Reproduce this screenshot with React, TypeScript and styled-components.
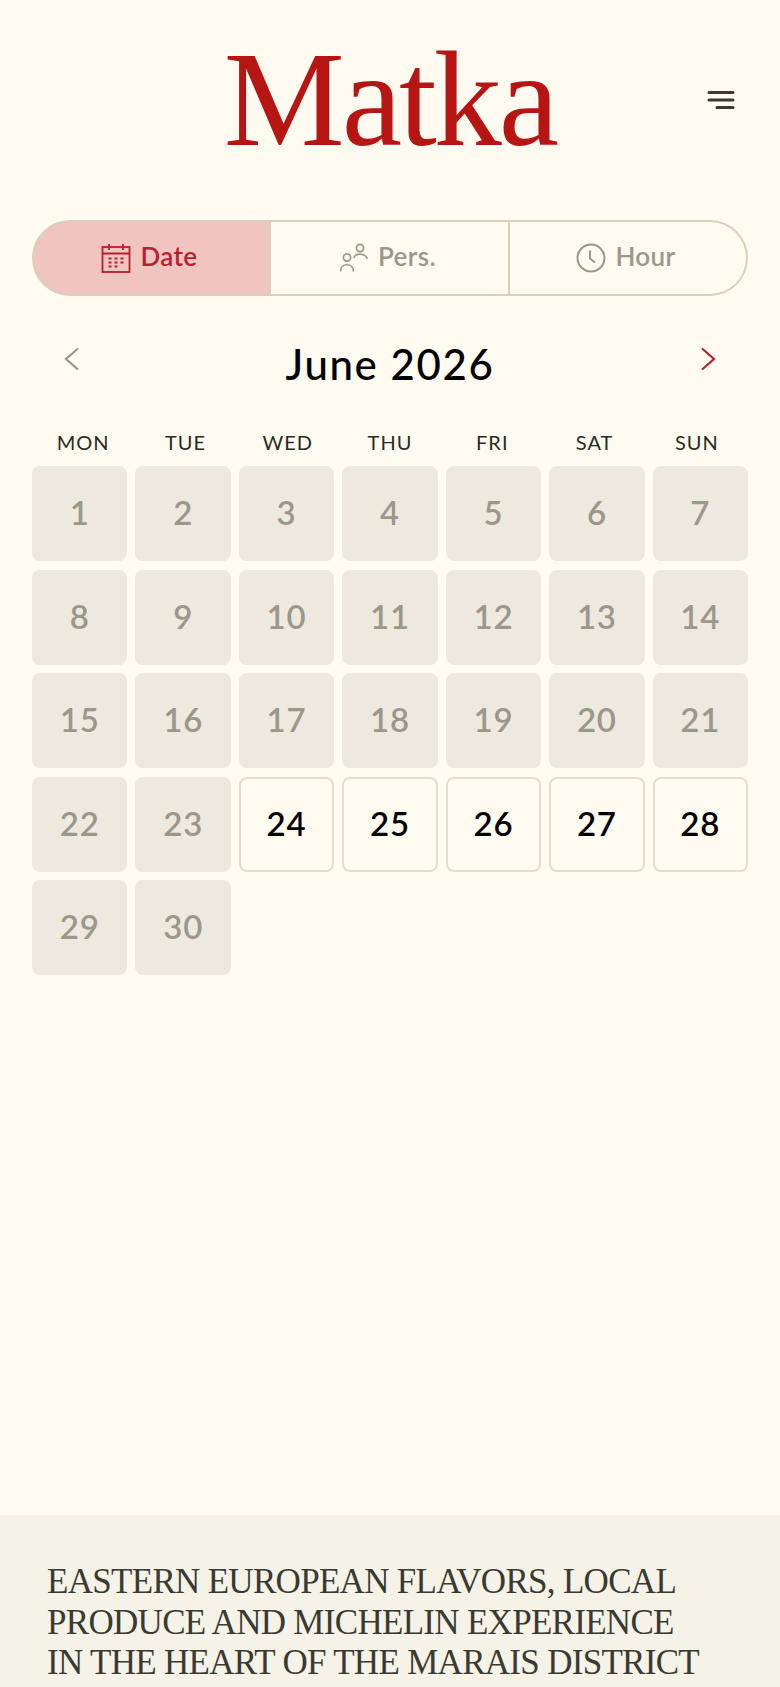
import * as React from 'react';
import styled, { createGlobalStyle } from 'styled-components';

// bg #fffbf0, red #b82030, muted #9a978b

const GlobalStyle = createGlobalStyle`
    html, body {
        margin: 0;
        padding: 0;
        background: #fffbf0;
    }
    * {
        box-sizing: border-box;
    }
`;

const Page = styled.div`
    display: flex;
    flex-direction: column;
    width: 780px;
    height: 1687px;
    overflow: hidden;
    background: #fffbf0;
    font-family: 'Lato', 'Liberation Sans', sans-serif;
`;

const Header = styled.header`
    position: relative;
    display: flex;
    justify-content: center;
    height: 220px;
`;

const Logo = styled.h1`
    margin: 0;
    padding-top: 24px;
    height: 160px;
    font-family: 'Liberation Serif', serif;
    font-size: 136px;
    line-height: 150px;
    font-weight: 400;
    letter-spacing: -3px;
    color: #b71414;
`;

const MenuButton = styled.button`
    position: absolute;
    top: 89px;
    right: 45px;
    display: flex;
    padding: 0;
    border: 0;
    background: none;
`;

const Main = styled.main`
    flex: 1;
    padding: 0 32px;
`;

const Tabs = styled.div`
    display: grid;
    grid-template-columns: 239px 239px 1fr;
    height: 76px;
`;

const Tab = styled.div<{ $active?: boolean; $first?: boolean; $last?: boolean }>`
    display: flex;
    align-items: center;
    justify-content: center;
    gap: 9px;
    padding-right: 4px;
    font-size: 26px;
    line-height: 30px;
    font-weight: 600;
    letter-spacing: 0.4px;
    color: ${p => (p.$active ? '#b82030' : '#9a978b')};
    background: ${p => (p.$active ? '#f0c4bf' : 'transparent')};
    border: 2px solid #d8d1b8;
    border-left-width: ${p => (p.$first ? '2px' : '0')};
    border-radius: ${p => (p.$first ? '38px 0 0 38px' : p.$last ? '0 38px 38px 0' : '0')};
`;

const TabLabel = styled.span`
    margin-top: -4px;
`;

const MonthBar = styled.div`
    display: flex;
    align-items: center;
    justify-content: space-between;
    height: 120px;
    padding: 0 32px;
`;

const MonthTitle = styled.h2`
    margin: 16px 0 0;
    font-size: 42px;
    line-height: 48px;
    font-weight: 500;
    letter-spacing: 1.6px;
    color: #000;
`;

const ArrowButton = styled.button`
    display: flex;
    margin-top: 6px;
    padding: 0;
    border: 0;
    background: none;
`;

const Weekdays = styled.div`
    display: grid;
    grid-template-columns: repeat(7, 1fr);
    margin-top: 12px;
    height: 38px;
`;

const Weekday = styled.span`
    text-align: center;
    font-size: 20px;
    line-height: 28px;
    letter-spacing: 1px;
    color: #2a2a22;
`;

const Days = styled.div`
    display: grid;
    grid-template-columns: repeat(7, 1fr);
    grid-auto-rows: 95px;
    gap: 8.5px 8px;
`;

const Day = styled.div<{ $open?: boolean }>`
    display: flex;
    align-items: center;
    justify-content: center;
    padding-bottom: 3px;
    font-size: 33px;
    font-weight: 600;
    letter-spacing: 0.8px;
    border-radius: 8px;
    color: ${p => (p.$open ? '#000' : '#9a978b')};
    background: ${p => (p.$open ? 'transparent' : '#eee9df')};
    border: 2px solid ${p => (p.$open ? '#e3ddcf' : '#eee9df')};
`;

const Footer = styled.footer`
    height: 172px;
    padding: 47px 47px 0;
    background: #f5f2e8;
`;

const Tagline = styled.p`
    margin: 0;
    font-family: 'Liberation Serif', serif;
    font-size: 35px;
    line-height: 40.5px;
    letter-spacing: -0.7px;
    color: #3a3a32;
    white-space: pre-line;
`;

const CalendarIcon = () => (
    <svg width="30" height="30" viewBox="0 0 30 30" fill="none" stroke="currentColor" strokeWidth="1.8">
        <rect x="1.5" y="4" width="27" height="25" />
        <path d="M1.5 10.500h27M8 1v6M22 1v6" />
        <path d="M7.500 15.500h3M13.500 15.500h3M19.500 15.500h3M7.500 19.500h3M13.500 19.500h3M19.500 19.500h3M7.500 23.500h3M13.500 23.500h3" strokeWidth="1.8" />
    </svg>
);

const PeopleIcon = () => (
    <svg width="30" height="30" viewBox="0 0 30 30" fill="none" stroke="currentColor" strokeWidth="1.7">
        <circle cx="8" cy="14.500" r="3.600" />
        <path d="M1.500 28.500c0-9 13-9 13 0" />
        <circle cx="21" cy="5" r="3.600" />
        <path d="M15 15c1-5 11-5.500 13.500 1" />
    </svg>
);

const ClockIcon = () => (
    <svg width="30" height="30" viewBox="0 0 30 30" fill="none" stroke="currentColor" strokeWidth="2">
        <circle cx="15" cy="15" r="13.500" />
        <path d="M14 7.500v8l5 4" />
    </svg>
);

const weekdays = ['MON', 'TUE', 'WED', 'THU', 'FRI', 'SAT', 'SUN'];
const days = Array.from({ length: 30 }, (_, i) => i + 1);
const isOpen = (day: number) => day >= 24 && day <= 28;

const App = () => {
    return (
        <>
            <GlobalStyle />
            <Page>
                <Header>
                    <Logo>Matka</Logo>
                    <MenuButton aria-label="Menu">
                        <svg width="28" height="22" viewBox="0 0 28 22" fill="none" stroke="#3a3a32" strokeWidth="3" strokeLinecap="round">
                            <path d="M2 3.500h24M2 11h24M10 18.500h16" />
                        </svg>
                    </MenuButton>
                </Header>
                <Main>
                    <Tabs>
                        <Tab $active $first>
                            <CalendarIcon />
                            <TabLabel>Date</TabLabel>
                        </Tab>
                        <Tab>
                            <PeopleIcon />
                            <TabLabel>Pers.</TabLabel>
                        </Tab>
                        <Tab $last>
                            <ClockIcon />
                            <TabLabel>Hour</TabLabel>
                        </Tab>
                    </Tabs>
                    <MonthBar>
                        <ArrowButton aria-label="Previous month">
                            <svg width="16" height="24" viewBox="0 0 16 24" fill="none" stroke="#9a978b" strokeWidth="2.2">
                                <path d="M14 1.500 2 12l12 10.500" />
                            </svg>
                        </ArrowButton>
                        <MonthTitle>June 2026</MonthTitle>
                        <ArrowButton aria-label="Next month">
                            <svg width="16" height="24" viewBox="0 0 16 24" fill="none" stroke="#b82030" strokeWidth="2.2">
                                <path d="M2 1.500 14 12 2 22.500" />
                            </svg>
                        </ArrowButton>
                    </MonthBar>
                    <Weekdays>
                        {weekdays.map(name => (
                            <Weekday key={name}>{name}</Weekday>
                        ))}
                    </Weekdays>
                    <Days>
                        {days.map(day => (
                            <Day key={day} $open={isOpen(day)}>
                                {day}
                            </Day>
                        ))}
                    </Days>
                </Main>
                <Footer>
                    <Tagline>
                        {'EASTERN EUROPEAN FLAVORS, LOCAL\nPRODUCE AND MICHELIN EXPERIENCE\nIN THE HEART OF THE MARAIS DISTRICT'}
                    </Tagline>
                </Footer>
            </Page>
        </>
    );
};

export default App;
